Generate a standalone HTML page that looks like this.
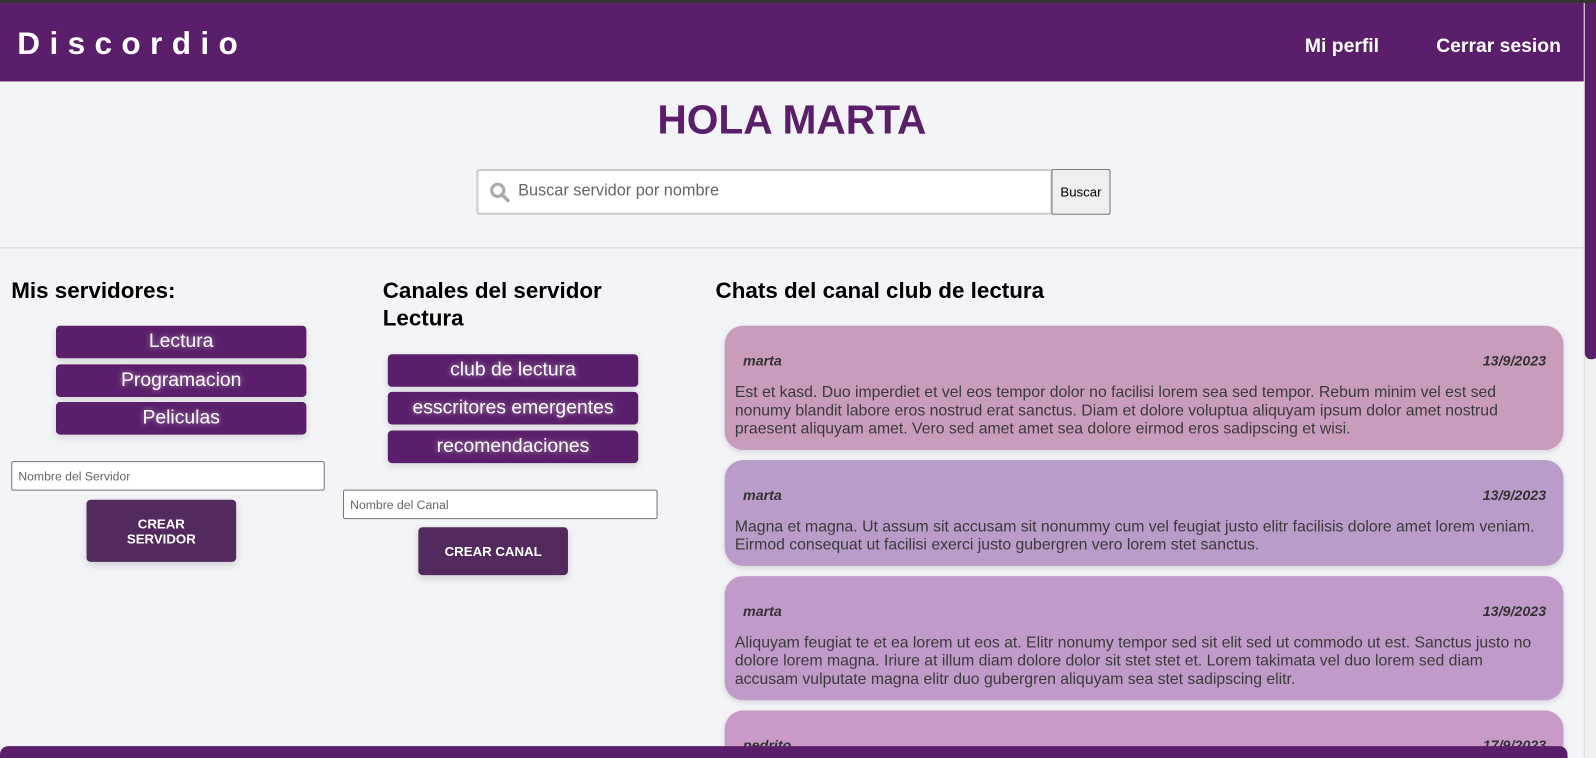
<!DOCTYPE html>
<html><head><meta charset="utf-8"><style>
*{box-sizing:border-box;margin:0;padding:0}
html,body{width:1596px;height:758px;overflow:hidden;background:#f3f4f8}
#w{position:absolute;left:0;top:0;width:1568px;height:745px;transform:scale(1.01786);transform-origin:0 0;font-family:"Liberation Sans",Arial,sans-serif;overflow:hidden}
.top{position:absolute;left:0;top:0;width:1568px;height:3px;background:#333}
.hdr{position:absolute;left:0;top:3px;width:1568px;height:77px;background:#5a1e6a}
.logo{position:absolute;left:17px;top:22px;color:#fff;font-weight:bold;font-size:31px;letter-spacing:9.2px}
.nav{position:absolute;top:32px;color:#fff;font-weight:bold;font-size:19px}
h1{position:absolute;left:0;width:1556px;top:96px;text-align:center;color:#5a1e6a;font-size:40px}
.search{position:absolute;left:468px;top:166px;width:566px;height:45px;background:#fff;border:2px solid #ccc;border-radius:3px}
.search span{position:absolute;left:39px;top:11px;font-size:16px;color:#666}
.btnb{position:absolute;left:1033px;top:166px;width:58px;height:45px;background:#efefef;border:1px solid #777;border-radius:2px;font-size:13px;line-height:43px;text-align:center;color:#000}
.hr{position:absolute;left:0;top:243px;width:1556px;height:1px;background:#d6d6d6}
.h2{position:absolute;font-weight:bold;font-size:22px;color:#000;line-height:27px}
.pill{position:absolute;width:246px;height:32px;background:#5a1e6a;border-radius:4px;color:#fff;font-size:19px;text-align:center;line-height:31px;text-shadow:0 0 6px rgba(255,255,255,.6);box-shadow:0 3px 8px rgba(0,0,0,.12)}
.inp{position:absolute;height:29px;background:#fff;border:1px solid #767676;border-radius:2px;font-size:12px;color:#666;padding:7px 6px}
.cb{position:absolute;background:#522a5e;border-radius:4px;color:#fff;font-weight:bold;font-size:13px;text-align:center;box-shadow:0 3px 8px rgba(0,0,0,.15)}
.msg{position:absolute;left:712px;width:824px;border-radius:18px;box-shadow:0 2px 6px rgba(0,0,0,.12)}
.msg .n{position:absolute;left:18px;top:26px;font-weight:bold;font-style:italic;font-size:14px;color:#333}
.msg .d{position:absolute;right:17px;top:26px;font-weight:bold;font-style:italic;font-size:14px;color:#333}
.msg p{position:absolute;left:10px;right:16px;top:57px;font-size:15.5px;line-height:18px;color:#3a3a3a}
.foot{position:absolute;left:0;top:733px;width:1540px;height:40px;background:#5a1e6a;border-radius:8px}
.sb{position:absolute;left:1556px;top:3px;width:14px;height:745px;background:#f0f0f0;border-left:1px solid #ddd}
.th{position:absolute;left:1557px;top:3px;width:13px;height:350px;background:#5a1e6a;border-radius:0 0 6px 6px}
</style></head><body><div id="w">
<div class="top"></div>
<div class="hdr"><div class="logo">Discordio</div>
<div class="nav" style="left:1282px">Mi perfil</div><div class="nav" style="left:1411px">Cerrar sesion</div></div>
<h1>HOLA MARTA</h1>
<div class="search"><svg style="position:absolute;left:10px;top:10px" width="22" height="22" viewBox="0 0 22 22"><circle cx="9" cy="9" r="6" fill="none" stroke="#aaa" stroke-width="3"/><path d="M13 13l6 6" stroke="#aaa" stroke-width="3.5" stroke-linecap="round"/></svg><span>Buscar servidor por nombre</span></div>
<div class="btnb">Buscar</div>
<div class="hr"></div>
<div class="h2" style="left:11px;top:272px">Mis servidores:</div>
<div class="pill" style="left:55px;top:320px">Lectura</div>
<div class="pill" style="left:55px;top:358px">Programacion</div>
<div class="pill" style="left:55px;top:395px">Peliculas</div>
<div class="inp" style="left:11px;top:453px;width:308px">Nombre del Servidor</div>
<div class="cb" style="left:85px;top:491px;width:147px;height:61px;padding-top:16px;line-height:15px">CREAR<br>SERVIDOR</div>
<div class="h2" style="left:376px;top:272px">Canales del servidor<br>Lectura</div>
<div class="pill" style="left:381px;top:348px">club de lectura</div>
<div class="pill" style="left:381px;top:385px">esscritores emergentes</div>
<div class="pill" style="left:381px;top:423px">recomendaciones</div>
<div class="inp" style="left:337px;top:481px;width:309px">Nombre del Canal</div>
<div class="cb" style="left:411px;top:518px;width:147px;height:47px;line-height:47px">CREAR CANAL</div>
<div class="h2" style="left:703px;top:272px">Chats del canal club de lectura</div>
<div class="msg" style="top:320px;height:122px;background:#c99cbc"><div class="n">marta</div><div class="d">13/9/2023</div><p>Est et kasd. Duo imperdiet et vel eos tempor dolor no facilisi lorem sea sed tempor. Rebum minim vel est sed nonumy blandit labore eros nostrud erat sanctus. Diam et dolore voluptua aliquyam ipsum dolor amet nostrud praesent aliquyam amet. Vero sed amet amet sea dolore eirmod eros sadipscing et wisi.</p></div>
<div class="msg" style="top:452px;height:104px;background:#b99cc9"><div class="n">marta</div><div class="d">13/9/2023</div><p>Magna et magna. Ut assum sit accusam sit nonummy cum vel feugiat justo elitr facilisis dolore amet lorem veniam. Eirmod consequat ut facilisi exerci justo gubergren vero lorem stet sanctus.</p></div>
<div class="msg" style="top:566px;height:122px;background:#c09ac8"><div class="n">marta</div><div class="d">13/9/2023</div><p>Aliquyam feugiat te et ea lorem ut eos at. Elitr nonumy tempor sed sit elit sed ut commodo ut est. Sanctus justo no dolore lorem magna. Iriure at illum diam dolore dolor sit stet stet et. Lorem takimata vel duo lorem sed diam<br>accusam vulputate magna elitr duo gubergren aliquyam sea stet sadipscing elitr.</p></div>
<div class="msg" style="top:698px;height:80px;background:#c99ac8"><div class="n">pedrito</div><div class="d">17/9/2023</div></div>
<div class="foot"></div>
<div class="sb"></div><div class="th"></div>
</div></body></html>
